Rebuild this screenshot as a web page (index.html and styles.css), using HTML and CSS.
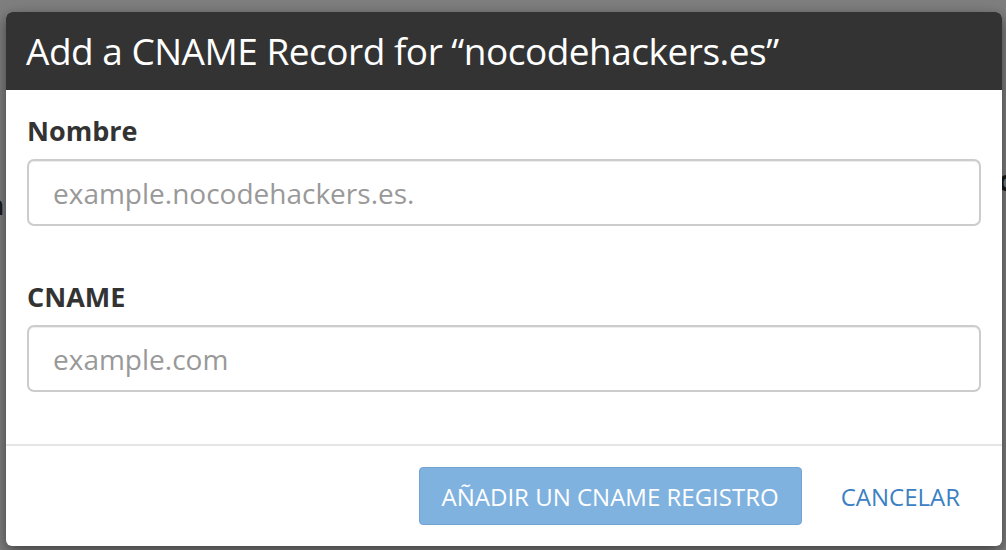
FILE: index.html
```html
<!DOCTYPE html>
<html lang="es">
<head>
<meta charset="utf-8">
<title>Add a CNAME Record</title>
<link rel="stylesheet" href="styles.css">
</head>
<body>
<div class="page">
  <p class="bg-line bg-left">Nombre de dominio registrado correctamente en la zone</p>
  <p class="bg-line bg-right">o</p>
</div>
<div class="overlay"></div>
<div class="modal">
  <div class="modal-header">
    <h1 class="modal-title">Add a CNAME Record for “nocodehackers.es”</h1>
  </div>
  <div class="modal-body">
    <div class="field">
      <label class="field-label" for="nombre">Nombre</label>
      <input class="field-input" id="nombre" type="text" placeholder="example.nocodehackers.es.">
    </div>
    <div class="field">
      <label class="field-label" for="cname">CNAME</label>
      <input class="field-input" id="cname" type="text" placeholder="example.com">
    </div>
  </div>
  <div class="modal-footer">
    <button class="btn btn-primary" type="button" disabled>AÑADIR UN CNAME REGISTRO</button>
    <a class="btn-link" href="#">CANCELAR</a>
  </div>
</div>
</body>
</html>
```

FILE: styles.css
```css
* { box-sizing: border-box; }
html, body { margin: 0; padding: 0; }
body {
  width: 1006px;
  height: 550px;
  overflow: hidden;
  background: #fff;
  font-family: "Open Sans", "Noto Sans", "Liberation Sans", sans-serif;
  color: #333;
  position: relative;
}
.page {
  padding-top: 184px;
}
.bg-line {
  margin: 0;
  font-size: 28px;
  line-height: 40px;
  color: #333;
  white-space: nowrap;
}
.bg-left {
  margin-left: -640px;
}
.bg-right {
  margin-top: -64px;
  margin-left: 998px;
  font-weight: 700;
}
.overlay {
  position: absolute;
  inset: 0;
  background: rgba(0, 0, 0, 0.5);
}
.modal {
  position: absolute;
  left: 6px;
  top: 12px;
  width: 996px;
  height: 534px;
  background: #fff;
  border-radius: 6px;
  box-shadow: 0 5px 15px rgba(0, 0, 0, 0.5);
  display: flex;
  flex-direction: column;
  overflow: hidden;
}
.modal-header {
  background: #333;
  height: 78px;
  padding: 0 20px;
  display: flex;
  align-items: center;
  flex: none;
}
.modal-title {
  margin: 0;
  color: #fff;
  font-weight: 400;
  font-size: 37px;
  line-height: 1.1;
  letter-spacing: -0.5px;
}
.modal-body {
  padding: 24px 21px 0;
  flex: 1;
}
.field {
  display: flex;
  flex-direction: column;
}
.field + .field {
  margin-top: 54px;
}
.field-label {
  font-size: 27px;
  font-weight: 700;
  line-height: 34px;
  color: #333;
  margin-bottom: 11px;
}
.field-input {
  width: 954px;
  height: 67px;
  border: 2px solid #ccc;
  border-radius: 7px;
  padding: 0 24px;
  font-family: inherit;
  font-size: 28px;
  color: #555;
  background: #fff;
  box-shadow: inset 0 1px 1px rgba(0, 0, 0, 0.075);
  outline: none;
}
.field-input::placeholder {
  color: #999;
}
.modal-footer {
  flex: none;
  height: 102px;
  border-top: 2px solid #e5e5e5;
  display: flex;
  justify-content: flex-end;
  align-items: center;
  padding: 0 42px 0 20px;
  gap: 39px;
}
.btn {
  font-family: inherit;
  font-size: 24px;
  height: 58px;
  padding: 0 22px;
  border-radius: 4px;
  cursor: pointer;
}
.btn-primary {
  background: #80b2df;
  color: #fff;
  border: 1px solid #72a4d3;
}
.btn-link {
  color: #3a80c3;
  font-size: 24px;
  text-decoration: none;
}
```
